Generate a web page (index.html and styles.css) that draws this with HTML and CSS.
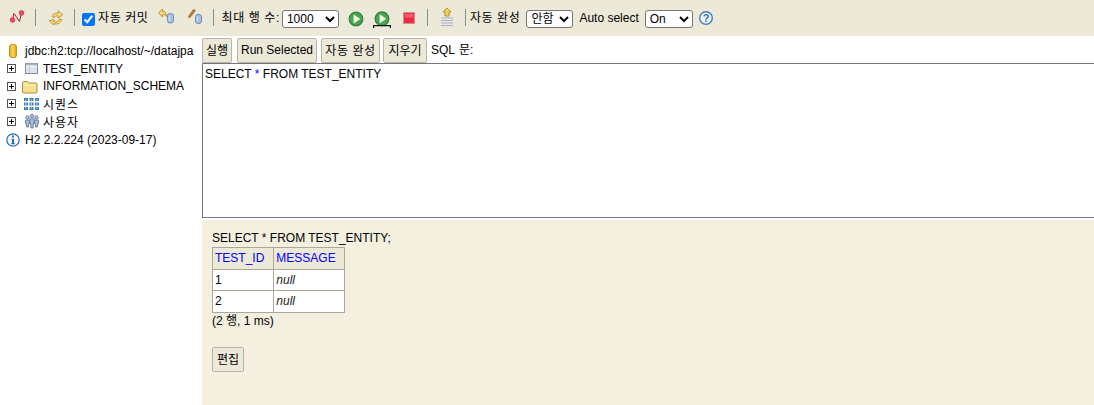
FILE: index.html
```html
<!DOCTYPE html>
<html lang="ko">
<head>
<meta charset="utf-8">
<title>H2 Console</title>
<link rel="stylesheet" href="styles.css">
</head>
<body>
<header class="toolbar">
  <svg class="ico disc" viewBox="0 0 16 16"><path d="M3.500 11 L5 4.500 L10.500 12.500 L12.500 4" fill="none" stroke="#a81c34" stroke-width="1"/><circle cx="3.500" cy="11" r="2.400" fill="#ee4a62" stroke="#c42a44" stroke-width=".6"/><circle cx="12.500" cy="4" r="2.400" fill="#ee4a62" stroke="#c42a44" stroke-width=".6"/></svg>
  <i class="sep s-a"></i>
  <svg class="ico refresh" viewBox="0 0 16 16"><path d="M4 6.500 C5 3.500 8 3 10 3.500 L10 .8 L14.800 4.800 L10 8 L10 5.800 C8 5.500 7 6 6.500 7.500 Z" fill="#f6dc85" stroke="#bd8a1f" stroke-width=".9"/><path d="M11.500 9 C10.500 12 8 12.500 6 12 L6 9.500 L1.200 10.800 L5.500 15 L6 13.800 C9 14.500 12.500 13.500 13.800 9.500 Z" fill="#f6dc85" stroke="#bd8a1f" stroke-width=".9"/></svg>
  <i class="sep s-b"></i>
  <label class="commit"><input type="checkbox" checked class="chk"><span class="ko">자동 커밋</span></label>
  <svg class="ico commit-ico" viewBox="0 0 17 16"><path d="M.6 5 L4.500 1 L4.500 3.300 C7 3.300 8.500 5 8.500 8.500 C7.500 7 6.500 6.700 4.500 6.700 L4.500 9 Z" fill="#f6dc85" stroke="#bd8a1f" stroke-width=".9"/><rect x="9.500" y="5.500" width="6" height="9.500" rx="2.400" fill="#a9c0e4" stroke="#6d8cbc"/><path d="M11.500 7.500 V13" stroke="#dbe6f6"/></svg>
  <svg class="ico rollback-ico" viewBox="0 0 17 16"><path d="M1.500 10 L2 7.500 L6.500 1.200 L8.500 2.500 L3.800 8.800 Z" fill="#b87a34" stroke="#7d5a30" stroke-width=".5"/><rect x="8.500" y="6.500" width="6" height="9" rx="2.400" fill="#a9c0e4" stroke="#6d8cbc"/><path d="M10.500 8.500 V13.500" stroke="#dbe6f6"/></svg>
  <i class="sep s-c"></i>
  <span class="lbl lbl-rows ko">최대 행 수:</span>
  <select class="sel sel-rows"><option>1000</option></select>
  <svg class="ico run" viewBox="0 0 16 16"><circle cx="8" cy="8" r="6.800" fill="#4aa552" stroke="#2f8540" stroke-width="1.300"/><path d="M5.800 3.800 L12 8 L5.800 12.200 Z" fill="#f2f7e6" stroke="#d5e6c0" stroke-width=".5"/></svg>
  <svg class="ico run2" viewBox="0 0 18 18"><circle cx="9" cy="7.800" r="6.800" fill="#4aa552" stroke="#2f8540" stroke-width="1.300"/><path d="M6.800 3.600 L13 7.800 L6.800 12 Z" fill="#f2f7e6" stroke="#d5e6c0" stroke-width=".5"/><path d="M.6 17 V14.700 H17.400 V17" fill="none" stroke="#111" stroke-width="1.200"/></svg>
  <svg class="ico stop" viewBox="0 0 14 14"><rect x="1.500" y="1.500" width="11" height="11" fill="#ea2c42" stroke="#d88c8c"/><rect x="3" y="3" width="8" height="3.500" fill="#f2606e"/></svg>
  <i class="sep s-d"></i>
  <svg class="ico hist" viewBox="0 0 16 20"><path d="M7 1 L11 5 L9 5 L9 9 L5 9 L5 5 L3 5 Z" fill="#f4d15e" stroke="#b4862a" stroke-width=".9"/><path d="M1 11 H13 M1 13.500 H13 M1 16 H13 M1 18.500 H13" stroke="#a3b1ca"/></svg>
  <i class="sep s-e"></i>
  <span class="lbl lbl-auto ko">자동 완성</span>
  <select class="sel sel-auto"><option>안함</option></select>
  <span class="lbl lbl-sel">Auto select</span>
  <select class="sel sel-on"><option>On</option></select>
  <svg class="ico help" viewBox="0 0 16 16"><circle cx="8" cy="8" r="6.300" fill="#f4f8fd" stroke="#3d7fc4" stroke-width="1.400"/><text x="8" y="12" text-anchor="middle" class="help-q">?</text></svg>
</header>
<div class="main">
  <nav class="tree">
    <div class="node node-db"><svg class="db" viewBox="0 0 8 14"><defs><linearGradient id="dbg"><stop offset="0" stop-color="#e0a51c"/><stop offset=".5" stop-color="#fbd95a"/><stop offset="1" stop-color="#d9981a"/></linearGradient></defs><rect x=".5" y=".5" width="7" height="13" rx="2.500" fill="url(#dbg)" stroke="#c4921c"/></svg><span>jdbc:h2:tcp://localhost/~/datajpa</span></div>
    <div class="node node-s"><b class="plus"></b><svg class="t-ico" viewBox="0 0 20 16"><rect x="4.500" y="2.500" width="12" height="10" fill="#fafbfd" stroke="#7f8ba0"/><path d="M4.500 3.500 H16.500" stroke="#aab4c6" stroke-width="2"/><path d="M5 7 H16 M5 9 H16 M5 11 H16 M8.500 5 V12" stroke="#c4cad6"/></svg><span>TEST_ENTITY</span></div>
    <div class="node"><b class="plus"></b><svg class="t-ico" viewBox="0 0 20 16"><path d="M1.500 14 Q1.500 15 2.500 15 L15 15 Q16 15 16 14 L16 6 Q16 5 15 5 L8 5 L6.500 3.500 L2.500 3.500 Q1.500 3.500 1.500 4.500 Z" fill="#f8e08a" stroke="#a89048"/><path d="M2.500 7 H15" stroke="#fdf3c8"/></svg><span>INFORMATION_SCHEMA</span></div>
    <div class="node node-s"><b class="plus"></b><svg class="t-ico" viewBox="0 0 20 16"><path d="M3 3.500 H7 M3 8 H7 M3 12.500 H7 M8.500 3.500 H12.500 M8.500 8 H12.500 M8.500 12.500 H12.500 M14 3.500 H18 M14 8 H18 M14 12.500 H18" stroke="#3f7fbd" stroke-width="3"/><path d="M5 3.500 V12.500 M10.500 3.500 V12.500 M16 3.500 V12.500" stroke="#bcd4ec" stroke-width="1"/></svg><span class="ko-3">시퀀스</span></div>
    <div class="node"><b class="plus"></b><svg class="t-ico" viewBox="0 0 20 16"><g fill="#a9bdd6" stroke="#51698a" stroke-width=".7"><circle cx="6.500" cy="4.500" r="1.700"/><path d="M4.500 7 H8.500 V11 H7.500 V14 H5.500 V11 H4.500 Z"/><circle cx="15.500" cy="4.500" r="1.700"/><path d="M13.500 7 H17.500 V11 H16.500 V14 H14.500 V11 H13.500 Z"/><circle cx="11" cy="3" r="1.800"/><path d="M8.800 5.800 H13.200 V10.500 H12.200 V15 H9.800 V10.500 H8.800 Z"/></g></svg><span class="ko-3">사용자</span></div>
    <div class="node node-ver"><svg class="info" viewBox="0 0 14 14"><circle cx="7" cy="7" r="6.200" fill="#f4f8fd" stroke="#2f6fb0" stroke-width="1.300"/><path d="M6 2.600 H8 V4.600 H6 Z M5.300 5.800 H8 V10.300 H9 V11.300 H5 V10.300 H6 V6.800 H5.300 Z" fill="#2f6fb0"/></svg><span>H2 2.2.224 (2023-09-17)</span></div>
  </nav>
  <section class="content">
    <div class="actions">
      <button class="btn b-run">실행</button>
      <button class="btn b-sel">Run Selected</button>
      <button class="btn b-auto ko">자동 완성</button>
      <button class="btn b-clear">지우기</button>
      <span class="sql-lbl">SQL 문:</span>
    </div>
    <div class="editor">SELECT <span class="star">*</span> FROM TEST_ENTITY</div>
    <div class="result">
      <div class="stmt">SELECT * FROM TEST_ENTITY;</div>
      <table class="grid">
        <tr class="r-h"><th>TEST_ID</th><th>MESSAGE</th></tr>
        <tr class="r-a"><td>1</td><td><em class="nul">null</em></td></tr>
        <tr class="r-b"><td>2</td><td><em class="nul">null</em></td></tr>
      </table>
      <div class="rows">(2 행, 1 ms)</div>
      <button class="btn btn-edit">편집</button>
    </div>
  </section>
</div>
</body>
</html>
```
FILE: styles.css
```css
* { box-sizing: border-box; }
html, body { margin: 0; padding: 0; height: 405px; overflow: hidden; background: #fff; }
body { font: 12px "Liberation Sans", "Noto Sans CJK KR", sans-serif; color: #000; }
.ko { letter-spacing: .6px; }
.ko-3 { letter-spacing: 1px; }

.toolbar { display: flex; align-items: flex-start; height: 36px; background: #ece9d8; padding-left: 9px; line-height: 36px; }
.ico { flex: none; display: block; }
.disc { width: 16px; height: 16px; margin-top: 9px; }
.sep { flex: none; width: 1px; height: 17px; margin-top: 9px; background: #8d8d8d; }
.s-a { margin-left: 10px; }
.s-b { margin-left: 10px; }
.s-c { margin-left: 9px; }
.s-d { margin-left: 11px; }
.s-e { margin-left: 9px; }
.refresh { width: 16px; height: 16px; margin: 10px 0 0 12px; }
.commit { display: flex; align-items: flex-start; margin-left: 7px; }
.chk { margin: 13px 3px 0 0; width: 13px; height: 13px; }
.commit-ico { width: 17px; height: 16px; margin: 8px 0 0 9px; }
.rollback-ico { width: 17px; height: 16px; margin: 8px 0 0 12px; }
.lbl { flex: none; }
.lbl-rows { margin-left: 8px; }
.sel { flex: none; font: 12px "Liberation Sans", "Noto Sans CJK KR", sans-serif; height: 18px; padding: 0; margin-top: 10px; background: #fff; border-radius: 3px; }
.sel-rows { width: 57px; margin-left: 2px; }
.run { width: 16px; height: 16px; margin: 11px 0 0 9px; }
.run2 { width: 18px; height: 18px; margin: 11px 0 0 9px; }
.stop { width: 14px; height: 14px; margin: 11px 0 0 11px; }
.hist { width: 16px; height: 20px; margin: 7px 0 0 12px; }
.lbl-auto { margin-left: 4px; }
.sel-auto { width: 47px; margin-left: 6px; }
.lbl-sel { margin-left: 6px; }
.sel-on { width: 48px; margin-left: 6px; }
.help { width: 16px; height: 16px; margin: 10px 0 0 5px; }
.help-q { font: bold 11px "Liberation Sans", sans-serif; fill: #2f6fb0; }

.main { display: flex; height: 369px; }
.tree { flex: none; width: 202px; padding: 5px 0 0 6px; white-space: nowrap; overflow: hidden; }
.node { display: flex; align-items: center; height: 18px; }
.node-s { height: 17px; }
.node-db { height: 19px; }
.node-ver { height: 20px; }
.plus { flex: none; width: 9px; height: 9px; border: 1px solid #555; margin: 0 5px 0 1px; background: linear-gradient(#000,#000) center/5px 1px no-repeat, linear-gradient(#000,#000) center/1px 5px no-repeat, #fff; }
.t-ico { flex: none; width: 20px; height: 16px; margin-right: 2px; }
.db { flex: none; width: 8px; height: 14px; margin: 0 8px 0 3px; }
.info { flex: none; width: 14px; height: 14px; margin-right: 5px; }

.content { flex: 1; min-width: 0; display: flex; flex-direction: column; }
.actions { display: flex; align-items: flex-start; height: 27px; padding-top: 2px; line-height: 25px; }
.btn { flex: none; font: 12px "Liberation Sans", "Noto Sans CJK KR", sans-serif; height: 25px; padding: 0 0 2px; background: #ece9d8; border: 1px solid #b8b5a6; border-radius: 2px; color: #000; }
.btn.ko { letter-spacing: .6px; }
.b-run { width: 30px; }
.b-sel { width: 80px; margin-left: 5px; }
.b-auto { width: 59px; margin-left: 4px; }
.b-clear { width: 44px; margin-left: 3px; }
.sql-lbl { margin-left: 4px; word-spacing: 1px; }
.editor { height: 155px; border: 1px solid #767676; border-right: 0; padding: 3px 2px; background: #fff; margin-bottom: 2px; }
.star { color: #0000ff; }

.result { flex: 1; background: #f4f0e0; padding: 11px 10px; }
.stmt { line-height: 14px; }
.grid { border-collapse: collapse; margin-top: 2px; }
.grid th, .grid td { border: 1px solid #aca899; font-weight: normal; text-align: left; padding: 0 8px 0 2px; }
.grid th:first-child, .grid td:first-child { padding-right: 9px; }
.grid th { background: #ece9d8; color: #0000ff; padding-bottom: 2px; }
.grid td { background: #fff; }
.r-h { height: 22px; }
.r-a { height: 21px; }
.r-b { height: 22px; }
.grid .r-b td { padding-bottom: 2px; }
.nul { color: #222; }
.rows { line-height: 14px; margin-top: 1px; }
.btn-edit { display: block; width: 32px; margin-top: 19px; }
```
